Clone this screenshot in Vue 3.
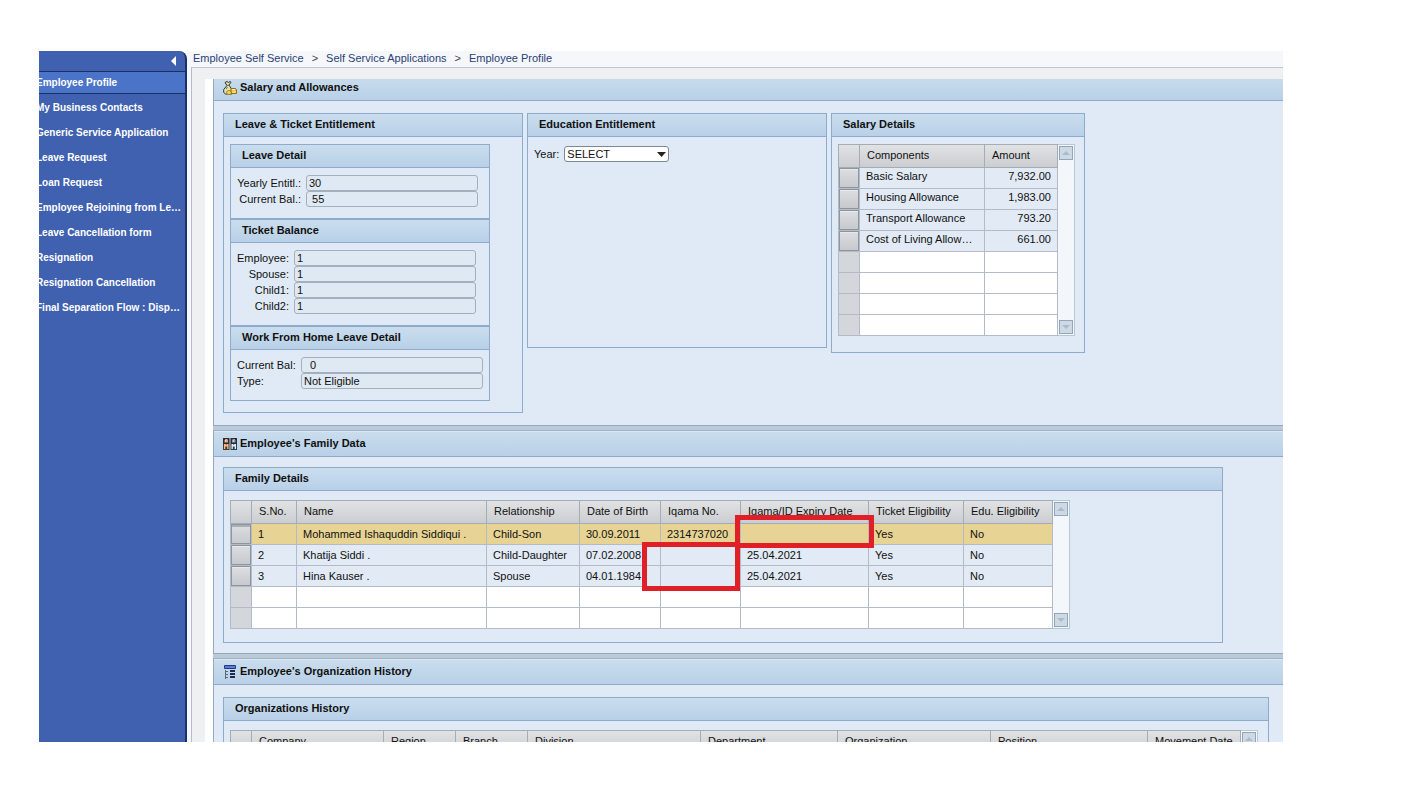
<script setup>
import { ref } from 'vue'

const menu = [
  'Employee Profile',
  'My Business Contacts',
  'Generic Service Application',
  'Leave Request',
  'Loan Request',
  'Employee Rejoining from Leave',
  'Leave Cancellation form',
  'Resignation',
  'Resignation Cancellation',
  'Final Separation Flow : Display',
]
const active = ref(0)

const crumbs = ['Employee Self Service', 'Self Service Applications', 'Employee Profile']

const leaveGroups = [
  {
    key: 'leave',
    title: 'Leave Detail',
    fields: [
      { label: 'Yearly Entitl.:', value: '30' },
      { label: 'Current Bal.:', value: ' 55' },
    ],
  },
  {
    key: 'ticket',
    title: 'Ticket Balance',
    fields: [
      { label: 'Employee:', value: '1' },
      { label: 'Spouse:', value: '1' },
      { label: 'Child1:', value: '1' },
      { label: 'Child2:', value: '1' },
    ],
  },
  {
    key: 'home',
    title: 'Work From Home Leave Detail',
    fields: [
      { label: 'Current Bal:', value: '  0' },
      { label: 'Type:', value: 'Not Eligible' },
    ],
  },
]

const salary = [
  ['Basic Salary', '7,932.00'],
  ['Housing Allowance', '1,983.00'],
  ['Transport Allowance', '793.20'],
  ['Cost of Living Allowance', '661.00'],
]

const familyColumns = [
  { name: 'S.No.', width: 45 },
  { name: 'Name', width: 190 },
  { name: 'Relationship', width: 93 },
  { name: 'Date of Birth', width: 81 },
  { name: 'Iqama No.', width: 80 },
  { name: 'Iqama/ID Expiry Date', width: 128 },
  { name: 'Ticket Eligibility', width: 95 },
  { name: 'Edu. Eligibility', width: 89 },
]
const family = [
  ['1', 'Mohammed Ishaquddin Siddiqui .', 'Child-Son', '30.09.2011', '2314737020', '', 'Yes', 'No'],
  ['2', 'Khatija Siddi .', 'Child-Daughter', '07.02.2008', '', '25.04.2021', 'Yes', 'No'],
  ['3', 'Hina Kauser .', 'Spouse', '04.01.1984', '', '25.04.2021', 'Yes', 'No'],
]
const selected = ref(0)

const historyColumns = [
  { name: 'Company', width: 132 },
  { name: 'Region', width: 72 },
  { name: 'Branch', width: 72 },
  { name: 'Division', width: 173 },
  { name: 'Department', width: 137 },
  { name: 'Organization', width: 153 },
  { name: 'Position', width: 157 },
  { name: 'Movement Date', width: 93 },
]
</script>

<template>
  <div class="page">
    <div class="portal">
      <nav class="sidebar" aria-label="Services">
        <div class="sidebar-top">
          <button type="button" class="collapse" aria-label="Collapse navigation">
            <svg width="5" height="10" viewBox="0 0 5 10"><path d="M5 0v10L0 5z" fill="#fff" /></svg>
          </button>
        </div>
        <ul>
          <li v-for="(item, i) in menu" :key="item" :class="{ active: i === active }">
            <a href="#" @click.prevent="active = i">{{ item }}</a>
          </li>
        </ul>
      </nav>

      <main class="main">
        <nav class="crumbs" aria-label="Breadcrumb">
          <template v-for="(crumb, i) in crumbs" :key="crumb">
            <span v-if="i" class="sep">&gt;</span>
            <a href="#">{{ crumb }}</a>
          </template>
        </nav>

        <div class="frame">
          <div class="content">
            <section class="block first">
              <h2>
                <svg width="14" height="14" viewBox="0 0 14 14">
                  <path d="M2 1.5l2-1 1.500 1 1.500-1 1 .8-2 2.700 2.800 4.500v4.500H2.500L.7 11.500V8.500L4 4.500z" fill="#dfe0b8" stroke="#34342c" />
                  <path d="M3.500 4.500l3.500-.5M3 8l1.500-2" fill="none" stroke="#6b6a45" />
                  <ellipse cx="6" cy="11.500" rx="2.500" ry="2" fill="#f3d551" stroke="#a8861c" />
                  <path d="M8 7.500h4.500L13.500 9v3.500H9L8 11z" fill="#efc93c" stroke="#8e701d" />
                  <path d="M9 8.500h3M9.500 11h3" stroke="#fff5b0" />
                </svg>
                Salary and Allowances
              </h2>
              <div class="body columns">
                <section class="panel entitlement">
                  <h3>Leave &amp; Ticket Entitlement</h3>
                  <div class="groups">
                    <section v-for="group in leaveGroups" :key="group.key" class="panel group" :class="group.key">
                      <h3>{{ group.title }}</h3>
                      <div class="fields">
                        <template v-for="(field, i) in group.fields" :key="field.label">
                          <label :for="group.key + i">{{ field.label }}</label>
                          <input :id="group.key + i" type="text" readonly :value="field.value" />
                        </template>
                      </div>
                    </section>
                  </div>
                </section>

                <section class="panel education">
                  <h3>Education Entitlement</h3>
                  <div class="year">
                    <label for="year">Year:</label>
                    <div class="select">
                      <select id="year">
                        <option>SELECT</option>
                      </select>
                      <svg width="9" height="5" viewBox="0 0 9 5"><path d="M0 0h9L4.500 5z" fill="#222" /></svg>
                    </div>
                  </div>
                </section>

                <section class="panel salary">
                  <h3>Salary Details</h3>
                  <div class="grid">
                    <table>
                      <colgroup>
                        <col class="pick-col" />
                        <col class="component-col" />
                        <col class="amount-col" />
                      </colgroup>
                      <thead>
                        <tr><th></th><th>Components</th><th>Amount</th></tr>
                      </thead>
                      <tbody>
                        <tr v-for="row in salary" :key="row[0]">
                          <td class="pick"><button type="button" :aria-label="'Select ' + row[0]"></button></td>
                          <td>{{ row[0] }}</td>
                          <td class="amount">{{ row[1] }}</td>
                        </tr>
                        <tr v-for="n in 4" :key="n" class="empty"><td class="pick"></td><td></td><td></td></tr>
                      </tbody>
                    </table>
                    <div class="scroll">
                      <button type="button" aria-label="Scroll up"><svg width="8" height="4" viewBox="0 0 8 4"><path d="M0 4h8L4 0z" fill="#a9bccd" /></svg></button>
                      <button type="button" aria-label="Scroll down"><svg width="8" height="4" viewBox="0 0 8 4"><path d="M0 0h8L4 4z" fill="#a9bccd" /></svg></button>
                    </div>
                  </div>
                </section>
              </div>
            </section>

            <section class="block">
              <h2>
                <svg width="14" height="13" viewBox="0 0 14 13">
                  <path d="M0 1h6.500v6H0zM7.500 1H14v6H7.500z" fill="#2b2b33" />
                  <path d="M2 2h2.500v1H5v2.500H1.500V3H2z" fill="#eda283" />
                  <path d="M9.500 2H12v1h.5v2.500H9V3h.5z" fill="#8fa0b0" />
                  <path d="M2 3.500h1v1H2zM10 3.500h1v1h-1z" fill="#fff" />
                  <path d="M0 7h6.500v6H0z" fill="#4b3630" />
                  <path d="M1 7h1.500l.8 1L4 7h1.500v5H4.200V9.500H2.300V12H1z" fill="#f5bd84" />
                  <path d="M7.500 7H14v6H7.500z" fill="#2c4150" />
                  <path d="M8.500 7H10l.8 1 .7-1H13v5h-1.300V9.500H9.800V12H8.500z" fill="#e8eff3" />
                </svg>
                Employee's Family Data
              </h2>
              <div class="body tight">
                <section class="panel family">
                  <h3>Family Details</h3>
                  <div class="grid">
                    <table>
                      <colgroup>
                        <col class="pick-col" />
                        <col v-for="col in familyColumns" :key="col.name" :style="{ width: col.width + 'px' }" />
                      </colgroup>
                      <thead>
                        <tr>
                          <th></th>
                          <th v-for="col in familyColumns" :key="col.name">{{ col.name }}</th>
                        </tr>
                      </thead>
                      <tbody>
                        <tr v-for="(row, r) in family" :key="row[0]" :class="{ selected: r === selected }">
                          <td class="pick"><button type="button" :aria-label="'Select row ' + row[0]" @click="selected = r"></button></td>
                          <td v-for="(cell, c) in row" :key="c">{{ cell }}</td>
                        </tr>
                        <tr v-for="n in 2" :key="n" class="empty">
                          <td class="pick"></td>
                          <td v-for="col in familyColumns" :key="col.name"></td>
                        </tr>
                      </tbody>
                    </table>
                    <div class="scroll">
                      <button type="button" aria-label="Scroll up"><svg width="8" height="4" viewBox="0 0 8 4"><path d="M0 4h8L4 0z" fill="#a9bccd" /></svg></button>
                      <button type="button" aria-label="Scroll down"><svg width="8" height="4" viewBox="0 0 8 4"><path d="M0 0h8L4 4z" fill="#a9bccd" /></svg></button>
                    </div>
                    <div class="mark mark-number"></div>
                    <div class="mark mark-expiry"></div>
                  </div>
                </section>
              </div>
            </section>

            <section class="block">
              <h2>
                <svg width="14" height="14" viewBox="0 0 14 14">
                  <path d="M1.500.5h11v3h-11z" fill="#5f7bd0" stroke="#26378f" />
                  <path d="M2.500 5v9M2 6.500h3M2 9.500h3M2 12.500h3" fill="none" stroke="#5c6a80" />
                  <path d="M7 6h5M7 9h5M7 12h5" stroke="#1c2c50" stroke-width="2" />
                </svg>
                Employee's Organization History
              </h2>
              <div class="body">
                <section class="panel history">
                  <h3>Organizations History</h3>
                  <div class="grid">
                    <table>
                      <colgroup>
                        <col class="pick-col" />
                        <col v-for="col in historyColumns" :key="col.name" :style="{ width: col.width + 'px' }" />
                      </colgroup>
                      <thead>
                        <tr>
                          <th></th>
                          <th v-for="col in historyColumns" :key="col.name">{{ col.name }}</th>
                        </tr>
                      </thead>
                    </table>
                    <div class="scroll">
                      <button type="button" aria-label="Scroll up"><svg width="8" height="4" viewBox="0 0 8 4"><path d="M0 4h8L4 0z" fill="#a9bccd" /></svg></button>
                    </div>
                  </div>
                </section>
              </div>
            </section>
          </div>
        </div>
      </main>
    </div>
  </div>
</template>

<style>
body {
  margin: 0;
  background: #fff;
}
</style>

<style scoped>
* {
  box-sizing: border-box;
}
.page {
  height: 100vh;
  padding: 51px 141px 65px 39px;
  font: 11px/14px "Liberation Sans", Arial, sans-serif;
  color: #111;
}
.portal {
  display: flex;
  height: 100%;
  overflow: hidden;
}
button {
  padding: 0;
  border: 0;
  font: inherit;
}

/* Side navigation */
.sidebar {
  flex: none;
  width: 148px;
  overflow: hidden;
  background: #3f61b0;
  border-right: 2px solid #1c2f6b;
  border-top-right-radius: 8px;
}
.sidebar-top {
  display: flex;
  justify-content: flex-end;
  align-items: center;
  height: 20px;
  padding-right: 9px;
}
.collapse {
  display: flex;
  background: none;
}
.sidebar ul {
  margin: 0;
  padding: 0;
  list-style: none;
}
.sidebar li {
  height: 25px;
  margin-left: -3px;
  padding: 5px 3px 0 0;
}
.sidebar li.active {
  height: 23px;
  margin-bottom: 2px;
  padding-top: 4px;
  background: #4b74c8;
  border-top: 1px solid #1c2f6b;
  border-bottom: 1px solid #1c2f6b;
}
.sidebar a {
  display: block;
  overflow: hidden;
  color: #fff;
  font-size: 10px;
  font-weight: bold;
  text-decoration: none;
  text-overflow: ellipsis;
  white-space: nowrap;
}

/* Breadcrumb and frame */
.main {
  display: flex;
  flex: 1;
  flex-direction: column;
  min-width: 0;
  padding-left: 4px;
  background: #f5f7fa;
}
.crumbs {
  flex: none;
  display: flex;
  gap: 8px;
  height: 16px;
  padding-left: 2px;
  white-space: nowrap;
}
.crumbs a {
  color: #2a4078;
  text-decoration: none;
}
.crumbs .sep {
  color: #444;
}
.frame {
  flex: 1;
  min-height: 0;
  padding: 11px 0 0 13px;
  background: #eff0f2;
  border-top: 1px solid #c0c6ce;
  border-left: 1px solid #b4bcc6;
}
.content {
  height: 100%;
  overflow: hidden;
  padding-left: 8px;
  background: #fff;
}

/* Page sections */
.block {
  margin-bottom: 4px;
  background: #dfeaf6;
  border-bottom: 1px solid #93a9c2;
  border-left: 1px solid #93a9c2;
  box-shadow: 0 4px #bcc9d6;
}
.block.first {
  margin-top: -5px;
}
h2,
h3 {
  margin: 0;
  font-size: 11px;
  line-height: 14px;
  background: linear-gradient(#cadded, #b8d0e8);
}
h2 {
  display: flex;
  align-items: center;
  gap: 3px;
  height: 27px;
  padding: 0 0 2px 9px;
  border-top: 1px solid #9fb3c8;
  border-bottom: 1px solid #93a9c2;
  box-shadow: inset 0 1px #dbe8f4;
}
h2 svg {
  margin-top: 2px;
}
.body {
  padding: 12px 14px 12px 9px;
}
.body.tight {
  padding-top: 10px;
  padding-bottom: 10px;
}
.columns {
  display: flex;
  align-items: flex-start;
  gap: 4px;
}
.panel {
  border: 1px solid #8fabcb;
}
.panel > h3 {
  height: 23px;
  padding: 3px 11px 0;
  border-bottom: 1px solid #8fabcb;
}
.entitlement {
  width: 300px;
}
.education {
  width: 300px;
  min-height: 235px;
}
.salary {
  width: 254px;
  padding-bottom: 16px;
}
.family {
  max-width: 1000px;
  padding-bottom: 13px;
}
.groups {
  width: 266px;
  padding: 7px 0 11px 6px;
}

/* Read-only fields */
.fields {
  display: grid;
  column-gap: 5px;
  grid-auto-rows: 16px;
  padding: 7px 6px 11px;
}
.leave .fields {
  grid-template-columns: 64px 172px;
}
.ticket .fields {
  grid-template-columns: 52px 182px;
}
.home .fields {
  grid-template-columns: 59px 182px;
}
.fields label {
  line-height: 16px;
  text-align: right;
  white-space: nowrap;
}
.home .fields label {
  text-align: left;
}
.fields input {
  width: 100%;
  height: 16px;
  padding: 0 2px;
  font: inherit;
  color: inherit;
  background: #dfe9f3;
  border: 1px solid #a3afbb;
  border-radius: 3px;
}
.year {
  display: flex;
  align-items: center;
  gap: 5px;
  padding: 9px 6px;
}
.select {
  display: flex;
  align-items: center;
  position: relative;
  width: 105px;
}
.select select {
  appearance: none;
  width: 100%;
  height: 16px;
  padding: 0 2px;
  font: inherit;
  color: inherit;
  background: #fff;
  border: 1px solid #7d8894;
  border-radius: 3px;
}
.select svg {
  position: absolute;
  right: 3px;
  pointer-events: none;
}

/* Data tables */
.grid {
  display: flex;
  position: relative;
  width: max-content;
  margin: 9px 0 0 6px;
}
.salary .grid {
  margin-top: 7px;
}
table {
  width: 0;
  table-layout: fixed;
  border-spacing: 0;
}
.pick-col {
  width: 22px;
}
.component-col {
  width: 125px;
}
.amount-col {
  width: 73px;
}
th {
  height: 24px;
  padding: 0 0 2px 7px;
  font-weight: normal;
  text-align: left;
  white-space: nowrap;
  background: linear-gradient(#e0e2e4, #cbcdd0);
  border: solid #a4adb6;
  border-width: 1px 1px 1px 0;
}
th:first-child {
  border-left-width: 1px;
}
td {
  height: 21px;
  padding: 0 6px;
  overflow: hidden;
  text-overflow: ellipsis;
  white-space: nowrap;
  background: #e1eaf5;
  border: solid #b3bcc6;
  border-width: 0 1px 1px 0;
}
.salary td {
  padding-bottom: 4px;
}
.family tbody td {
  padding-right: 0;
}
td.amount {
  text-align: right;
}
tr.selected td {
  background: #e7d393;
}
tr.empty td {
  background: #fff;
}
.grid td.pick,
.grid tr.selected td.pick,
.grid tr.empty td.pick {
  padding: 0;
  background: #d3d7dc;
  border-left-width: 1px;
}
.pick button {
  display: block;
  width: 20px;
  height: 20px;
  background: linear-gradient(#dcdee1, #c6c9cd);
  border: 1px solid #8e959e;
  box-shadow: inset 0 1px #e6e8eb;
}
.selected .pick button {
  box-shadow: inset 0 2px #a9afb7;
}
.scroll {
  display: flex;
  flex-direction: column;
  justify-content: space-between;
  width: 17px;
  padding: 1px;
  background: #f3f7fc;
  border: solid #b9c6d3;
  border-width: 1px 1px 1px 0;
}
.scroll button {
  display: flex;
  align-items: center;
  justify-content: center;
  width: 14px;
  height: 14px;
  background: #ced9e4;
  border: 1px solid #8fa7bd;
}

/* Highlight boxes laid over the family table */
.mark {
  position: absolute;
  border: 5px solid #e01f26;
  pointer-events: none;
}
.mark-number {
  left: 412px;
  top: 42px;
  width: 98px;
  height: 49px;
}
.mark-expiry {
  left: 505px;
  top: 15px;
  width: 139px;
  height: 33px;
}
</style>
